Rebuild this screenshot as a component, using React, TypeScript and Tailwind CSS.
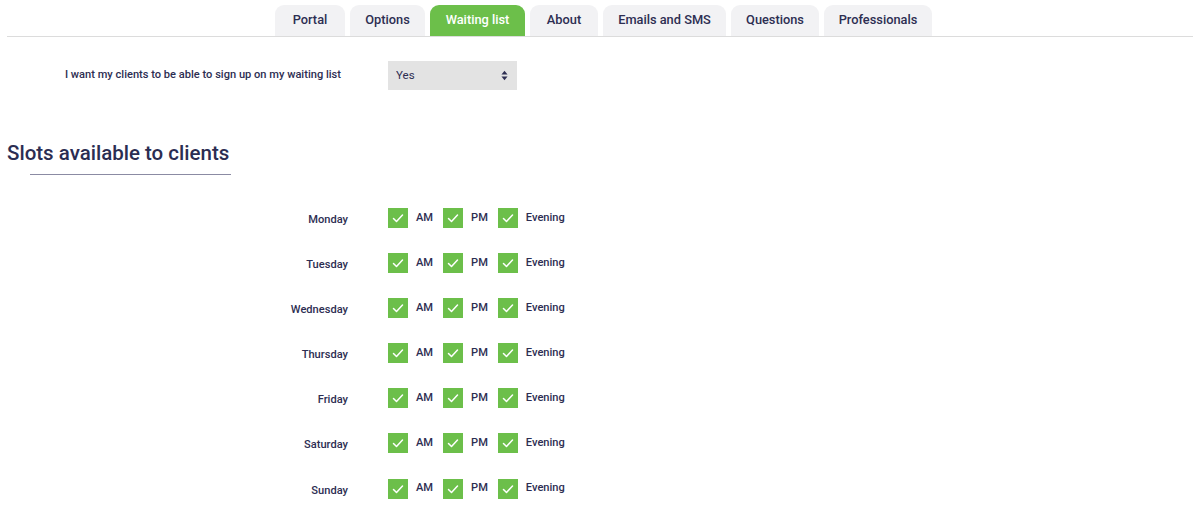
import { useState } from "react";

const TABS = [
  { label: "Portal", width: "w-[70px]" },
  { label: "Options", width: "w-[75px]" },
  { label: "Waiting list", width: "w-[95px]" },
  { label: "About", width: "w-[68px]" },
  { label: "Emails and SMS", width: "w-[123px]" },
  { label: "Questions", width: "w-[88px]" },
  { label: "Professionals", width: "w-[108px]" },
];

const DAYS = ["Monday", "Tuesday", "Wednesday", "Thursday", "Friday", "Saturday", "Sunday"];
const SLOTS = ["AM", "PM", "Evening"];

function GreenCheck({ checked, onToggle }: { checked: boolean; onToggle: () => void }) {
  return (
    <button
      type="button"
      onClick={onToggle}
      className={`flex h-5 w-5 items-center justify-center ${checked ? "bg-[#6cbf4a]" : "bg-[#e3e3e3]"}`}
    >
      {checked ? (
        <svg viewBox="0 0 20 20" className="h-5 w-5" fill="none">
          <polyline
            points="5.5,10.5 8.5,13.5 14.5,7"
            stroke="white"
            strokeWidth="1.5"
            strokeLinecap="round"
            strokeLinejoin="round"
          />
        </svg>
      ) : null}
    </button>
  );
}

export default function App() {
  const [active, setActive] = useState("Waiting list");
  const [signup, setSignup] = useState("Yes");
  const [slots, setSlots] = useState<Record<string, boolean>>(() => {
    const init: Record<string, boolean> = {};
    DAYS.forEach((d) => SLOTS.forEach((s) => (init[`${d}-${s}`] = true)));
    return init;
  });

  const toggle = (key: string) => setSlots((prev) => ({ ...prev, [key]: !prev[key] }));

  return (
    <div className="min-h-[513px] bg-white px-[7px] font-['Roboto',sans-serif] text-[#2d2e52]">
      <nav className="flex justify-center gap-[5px] border-b border-[#dcdcdc] pl-[7px] pt-[5px]">
        {TABS.map((tab) => {
          const isActive = tab.label === active;
          return (
            <button
              key={tab.label}
              type="button"
              onClick={() => setActive(tab.label)}
              className={`${tab.width} h-[31px] rounded-t-[9px] pb-[2px] text-center text-[12.8px] font-medium ${
                isActive ? "bg-[#6cbf4a] text-white" : "bg-[#f2f2f4] text-[#2d2e52]"
              }`}
            >
              {tab.label}
            </button>
          );
        })}
      </nav>

      <div className="mt-[24px] flex items-center">
        <label className="w-[334px] text-right text-[11.1px] font-medium">
          I want my clients to be able to sign up on my waiting list
        </label>
        <div className="relative ml-[47px] h-[29px] w-[129px] bg-[#e3e3e3]">
          <select
            value={signup}
            onChange={(e) => setSignup(e.target.value)}
            className="h-full w-full appearance-none bg-transparent pl-2 text-[11.5px] text-[#2d2e52] outline-none"
          >
            <option>Yes</option>
            <option>No</option>
          </select>
          <svg viewBox="0 0 8 12" className="pointer-events-none absolute right-[9px] top-[9px] h-[11px] w-[7px]">
            <polygon points="4,0.5 7.5,4.8 0.5,4.8" fill="#2d2e52" />
            <polygon points="0.5,7.2 7.5,7.2 4,11.5" fill="#2d2e52" />
          </svg>
        </div>
      </div>

      <h2 className="mt-[51px] text-[20.5px] font-medium leading-[24px] text-[#2b2d52]">
        Slots available to clients
      </h2>
      <div className="ml-[23px] mt-[9px] h-px w-[201px] bg-[#8b8ba3]" />

      <div className="mt-[33px] flex flex-col">
        {DAYS.map((day) => (
          <div key={day} className="flex h-[45.1px] items-start">
            <span className="mt-[4px] w-[341px] text-right text-[11.1px] font-medium">{day}</span>
            <div className="ml-[40px] flex items-center">
              {SLOTS.map((slot) => {
                const key = `${day}-${slot}`;
                return (
                  <div key={slot} className="mr-[10px] flex items-center gap-[8px]">
                    <GreenCheck checked={slots[key]} onToggle={() => toggle(key)} />
                    <span className="text-[11.1px] font-medium">{slot}</span>
                  </div>
                );
              })}
            </div>
          </div>
        ))}
      </div>
    </div>
  );
}
